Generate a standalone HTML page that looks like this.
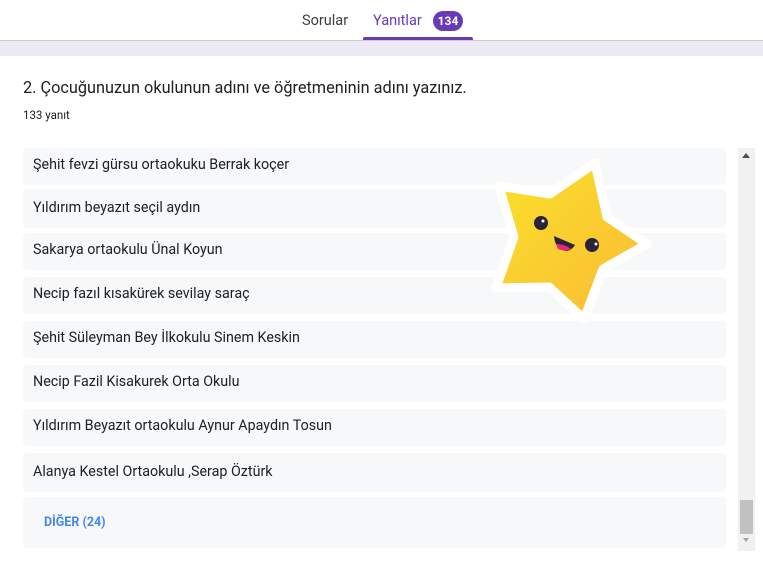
<!DOCTYPE html>
<html><head><meta charset="utf-8"><style>
body{margin:0;width:763px;height:567px;background:#fff;font-family:Roboto,"Liberation Sans",Arial,sans-serif;position:relative;overflow:hidden}
.tab{position:absolute;top:12px;font-size:14.5px;color:#3c4043}
.band{position:absolute;left:0;top:40px;width:763px;height:15px;background:#ede9f5;border-top:1px solid #ccc}
.q{position:absolute;left:23px;top:78px;font-size:16.3px;color:#202124}
.n{position:absolute;left:23px;top:108px;font-size:11.5px;color:#202124}
.item{position:absolute;left:23px;width:703px;height:37px;background:#f7f8fa;border-radius:4px;font-size:14.3px;color:#202124;line-height:34px;text-indent:10px}
</style></head><body>
<div class="tab" style="left:302px">Sorular</div>
<div class="tab" style="left:373px;color:#673ab7">Yanıtlar</div>
<div style="position:absolute;left:433px;top:11px;width:30px;height:20px;border-radius:10px;background:#673ab7;color:#fff;font-size:12px;font-weight:bold;text-align:center;line-height:20px">134</div>
<div style="position:absolute;left:363px;top:37px;width:110px;height:3px;background:#673ab7;border-radius:2px 2px 0 0"></div>
<div class="band"></div>
<div class="q">2. Çocuğunuzun okulunun adını ve öğretmeninin adını yazınız.</div>
<div class="n">133 yanıt</div>
<div class="item" style="top:148px">Şehit fevzi gürsu ortaokuku Berrak koçer</div>
<div class="item" style="top:189px;height:39px;line-height:38px">Yıldırım beyazıt seçil aydın</div>
<div class="item" style="top:233px">Sakarya ortaokulu Ünal Koyun</div>
<div class="item" style="top:277px">Necip fazıl kısakürek sevilay saraç</div>
<div class="item" style="top:321px">Şehit Süleyman Bey İlkokulu Sinem Keskin</div>
<div class="item" style="top:365px">Necip Fazil Kisakurek Orta Okulu</div>
<div class="item" style="top:409px">Yıldırım Beyazıt ortaokulu Aynur Apaydın Tosun</div>
<div class="item" style="top:453px;height:39px;line-height:38px">Alanya Kestel Ortaokulu ,Serap Öztürk</div>
<div class="item" style="top:497px;height:51px;line-height:51px;text-indent:21px;color:#4285f4;font-size:12.5px;font-weight:bold">DİĞER (24)</div>
<div style="position:absolute;left:738px;top:148px;width:17px;height:403px;background:#f1f1f1"></div>
<div style="position:absolute;left:740px;top:500px;width:13px;height:34px;background:#c1c1c1"></div>
<div style="position:absolute;left:742px;top:153px;width:0;height:0;border-left:4px solid transparent;border-right:4px solid transparent;border-bottom:5px solid #505050"></div>
<div style="position:absolute;left:743px;top:538px;width:0;height:0;border-left:3px solid transparent;border-right:3px solid transparent;border-top:4px solid #a3a3a3"></div>
<svg style="position:absolute;left:0;top:0" width="763" height="567">
<defs><linearGradient id="g" x1="0" y1="0" x2="1" y2="1"><stop offset="0" stop-color="#fbe12c"/><stop offset="1" stop-color="#f9b934"/></linearGradient></defs>
<polygon points="595,163 607,217 647,244 603,269 584,319 549,287 496,288 514,237 499,186 550,194" fill="url(#g)" stroke="#fff" stroke-width="9" stroke-linejoin="round"/>
<circle cx="541" cy="223" r="7" fill="#2a2438"/><circle cx="543" cy="221" r="1.5" fill="#fff"/>
<circle cx="592" cy="245" r="7" fill="#2a2438"/><circle cx="596" cy="244" r="1.5" fill="#fff"/>
<path d="M554,236 L575,245 Q570,253 562,250 Q555,247 554,236Z" fill="#2a2438"/>
<path d="M556,244 Q565,244 571,249 Q564,252 558,249Z" fill="#e8267f"/>
</svg>
</body></html>
